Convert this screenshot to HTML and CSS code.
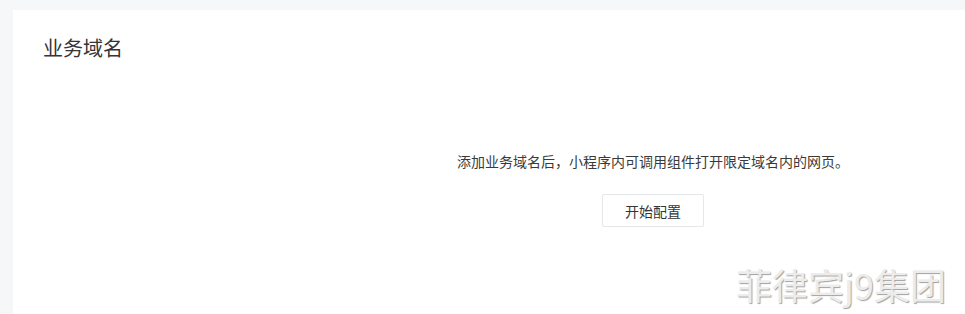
FILE: index.html
```html
<!DOCTYPE html>
<html lang="zh-CN">
<head>
  <meta charset="UTF-8" />
  <title>业务域名</title>
  <link rel="stylesheet" href="styles.css">
</head>
<body>
  <div class="card">
    <h2 class="title">业务域名</h2>
    <div class="empty">
      <p class="desc">添加业务域名后，小程序内可调用组件打开限定域名内的网页。</p>
      <button class="btn">开始配置</button>
    </div>
  </div>
  <div class="watermark">菲律宾j9集团</div>
</body>
</html>
```

FILE: styles.css
```css
html, body {
  margin: 0;
  height: 100%;
  overflow: hidden;
}
body {
  background: #f6f7f9;
  font-family: "Noto Sans CJK SC", "Microsoft YaHei", sans-serif;
  color: #353535;
  padding: 10px 0 0 13px;
  box-sizing: border-box;
  position: relative;
}
.card {
  background: #fff;
  width: 1280px;
  height: 400px;
  padding: 26px 30px 0;
  box-sizing: border-box;
}
.title {
  margin: 0;
  font-size: 20px;
  font-weight: normal;
  line-height: 24px;
}
.empty {
  text-align: center;
  padding-top: 91px;
}
.desc {
  margin: 0;
  font-size: 14px;
  line-height: 20px;
  color: #3a3a3a;
}
.btn {
  margin-top: 23px;
  width: 102px;
  height: 33px;
  background: #fff;
  border: 1px solid #e4e8eb;
  border-radius: 2px;
  font-family: inherit;
  font-size: 14px;
  color: #353535;
}
.watermark {
  position: absolute;
  left: 736px;
  top: 258px;
  font-size: 36px;
  color: #ececec;
  text-shadow: 1px 1px 1px #a0a0a0;
}
```
